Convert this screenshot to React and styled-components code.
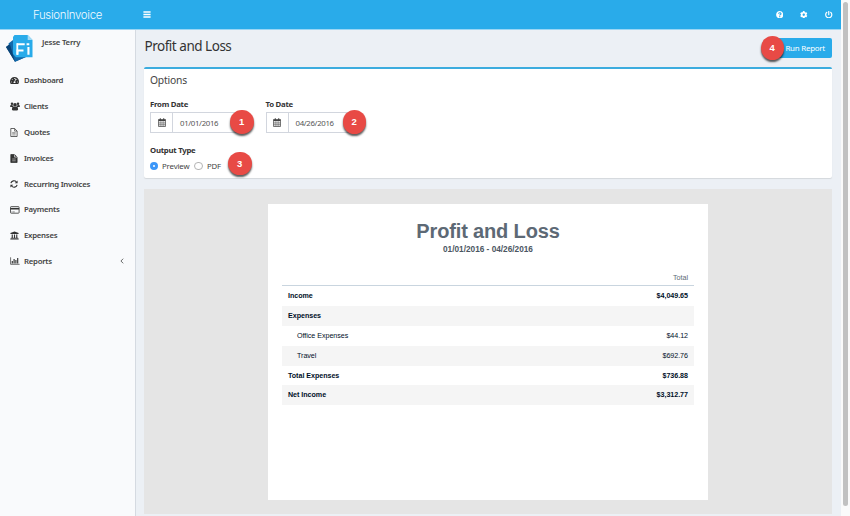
import React from "react";
import styled, { createGlobalStyle, css } from "styled-components";
import {
  FaTachometerAlt,
  FaUniversity,
  FaQuestionCircle,
  FaCog,
  FaPowerOff,
} from "react-icons/fa";

const GlobalStyle = createGlobalStyle`
  * { box-sizing: border-box; }
  body {
    margin: 0;
    overflow: hidden;
    background: #ecf0f5;
    font-family: "Source Sans Pro", "Noto Sans", sans-serif;
    font-size: 8px;
    color: #333;
  }
`;

const Window = styled.div`
  display: flex;
  width: 850px;
  height: 516px;
`;

const Page = styled.div`
  display: flex;
  flex-direction: column;
  width: 841px;
`;

const ScrollTrack = styled.div`
  width: 9px;
  padding: 2px 2px 10px;
  background: #fafafa;
`;

const ScrollThumb = styled.div`
  width: 5px;
  height: 504px;
  border-radius: 3px;
  background: #c1c1c1;
`;

const Header = styled.header`
  display: flex;
  align-items: center;
  height: 30px;
  background: #29abea;
  border-bottom: 1px solid #9bd6f4;
  color: #fff;
`;

const Brand = styled.div`
  width: 135px;
  text-align: center;
  font: 300 11.4px/30px Inter, sans-serif;
  letter-spacing: -0.3px;
  color: #f2faff;
`;

const MenuToggle = styled.div`
  display: flex;
  flex: 1;
  padding-left: 8px;
`;

const HeaderTools = styled.div`
  display: flex;
  align-items: center;
  gap: 17.2px;
  padding-right: 8.5px;
  font-size: 7.5px;
`;

const Body = styled.div`
  display: flex;
  flex: 1;
  min-height: 0;
`;

const Sidebar = styled.aside`
  width: 136px;
  background: #f9fafc;
  border-right: 1px solid #d5dae1;
`;

const UserPanel = styled.div`
  display: flex;
  gap: 7px;
  height: 38px;
  padding: 4px 0 0 5px;
`;

const UserName = styled.div`
  padding-top: 3px;
  font-weight: 600;
  font-size: 7.8px;
  line-height: 10px;
  letter-spacing: -0.22px;
  color: #444;
`;

const Nav = styled.nav`
  display: flex;
  flex-direction: column;
`;

const NavItem = styled.a`
  display: flex;
  align-items: center;
  height: 25.8px;
  padding: 0 11px 0 10px;
  color: #444;
  font-weight: 600;
  font-size: 7.8px;
  letter-spacing: -0.26px;
`;

const NavIcon = styled.span`
  display: flex;
  width: 14px;
  font-size: 9px;
  color: #333;
`;

const NavLabel = styled.span`
  flex: 1;
  line-height: 10px;
  padding-bottom: 1px;
`;

const Content = styled.main`
  flex: 1;
  min-width: 0;
  padding: 8px 9px 0 8px;
`;

const TitleBar = styled.div`
  display: flex;
  justify-content: space-between;
  height: 29px;
`;

const Title = styled.h1`
  margin: 0;
  padding-left: 0.5px;
  font-weight: 400;
  font-size: 13.5px;
  line-height: 17px;
  letter-spacing: -0.48px;
`;

const RunButton = styled.button`
  position: relative;
  width: 60px;
  height: 20px;
  padding: 0 7px 0 0;
  border: 0;
  border-radius: 2px;
  background: #29abea;
  color: #fff;
  font: 400 7.9px/20px "Noto Sans", sans-serif;
  letter-spacing: -0.22px;
  text-align: right;
`;

const Box = styled.section`
  height: 111px;
  padding: 0 6px;
  background: #fff;
  border-top: 2px solid #3cacde;
  border-radius: 2px;
  box-shadow: 0 1px 1px rgba(0, 0, 0, 0.1);
`;

const BoxTitle = styled.h3`
  margin: 0;
  font-weight: 400;
  font-size: 10.3px;
  line-height: 23px;
  letter-spacing: -0.2px;
  color: #444;
`;

const DateFields = styled.div`
  display: flex;
  gap: 23px;
  padding-top: 6px;
`;

const Field = styled.div`
  position: relative;
  width: 92.5px;
`;

const Label = styled.div`
  font-weight: 700;
  font-size: 7.8px;
  line-height: 12px;
  letter-spacing: -0.27px;
`;

const InputGroup = styled.div`
  display: flex;
  height: 21px;
  margin-top: 2px;
  border: 1px solid #d2d6de;
`;

const Addon = styled.span`
  display: flex;
  align-items: center;
  justify-content: center;
  width: 22px;
  border-right: 1px solid #d2d6de;
`;

const DateValue = styled.span`
  padding-left: 7px;
  font-size: 7.8px;
  line-height: 20px;
  color: #555;
  letter-spacing: -0.33px;
`;

const OutputType = styled.div`
  position: relative;
  padding-top: 11px;
`;

const Radios = styled.div`
  display: flex;
  align-items: center;
  height: 20px;
  font-size: 7.8px;
  letter-spacing: -0.13px;
  color: #444;
`;

const Radio = styled.span`
  width: 8.5px;
  height: 8.5px;
  margin-right: 4px;
  margin-left: ${(p) => p.$offset ?? -0.5}px;
  border-radius: 50%;
  ${(p) =>
    p.$checked
      ? css`
          border: 3px solid #3b96f8;
          background: #fff;
        `
      : css`
          border: 1px solid #b4b4b4;
          background: #fff;
        `}
`;

const Marker = styled.span`
  position: absolute;
  left: ${(p) => p.$left}px;
  top: ${(p) => p.$top}px;
  width: 23.5px;
  height: 23.5px;
  border-radius: 50%;
  background: #e84a45;
  box-shadow: 0 2px 2px rgba(0, 0, 0, 0.65);
  color: #fff;
  font: 700 9.5px/23px "Liberation Sans", sans-serif;
  letter-spacing: 0;
  text-align: center;
`;

const Preview = styled.section`
  display: flex;
  justify-content: center;
  height: 325px;
  margin-top: 11px;
  padding-top: 15px;
  background: #e5e5e5;
`;

const Paper = styled.article`
  width: 440px;
  height: 296px;
  padding: 13px 14px 0;
  background: #fff;
  font-family: "Liberation Sans", sans-serif;
  color: #001028;
`;

const ReportTitle = styled.h2`
  margin: 0;
  font-size: 20px;
  line-height: 28px;
  letter-spacing: -0.15px;
  text-align: center;
  color: #5d6975;
`;

const ReportRange = styled.div`
  font-weight: 700;
  font-size: 8.25px;
  line-height: 10px;
  text-align: center;
  color: #4b5662;
`;

const Table = styled.div`
  margin-top: 15px;
`;

const Row = styled.div`
  display: flex;
  justify-content: space-between;
  height: 19.9px;
  padding: 0 6px 0 ${(p) => (p.$indent ? 15 : 6)}px;
  background: ${(p) => (p.$shaded ? "#f5f5f5" : "transparent")};
  font-weight: ${(p) => (p.$bold ? 700 : 400)};
  font-size: 7.15px;
  line-height: 20px;
  letter-spacing: -0.04px;
`;

const HeadRow = styled.div`
  height: 16px;
  padding-right: 6px;
  border-bottom: 1px solid #c9d5df;
  font-size: 7.15px;
  line-height: 17px;
  text-align: right;
  color: #5d6975;
`;

const BarsIcon = () => (
  <svg width="8" height="7" viewBox="0 0 8 7">
    <path d="M.4 1h7.2M.4 3.5h7.2M.4 6h7.2" stroke="#fff" strokeWidth="1.4" />
  </svg>
);

const Logo = () => (
  <svg width="30" height="29" viewBox="0 0 30 29">
    <path d="M1 13 7 8l16 14-13 5.800z" fill="#0b4c84" />
    <path d="M8 6 3.500 9.500l4 13 2.500 5.300L21 23z" fill="#1169ab" />
    <path d="M1 13l4-2.500 5 17.300z" fill="#0a4377" />
    <path d="M9.500 1h13.200l4.800 5v17.200H11L8 20V3z" fill="#29abea" />
    <path d="M22.700 1v5h4.800z" fill="#a4dbf6" />
    <path d="M12.500 20.700v-4.200h6M11.800 10.200h12.500" fill="none" stroke="#fff" strokeWidth="2" />
    <path d="M11.400 9.200h1.800v11.600h-1.800zM22.400 13h2.100v7.800h-2.100z" fill="#fff" />
    <path d="M19.700 9h1.900v3h-1.900z" fill="#29abea" />
  </svg>
);

const UsersIcon = () => (
  <svg width="10" height="9" viewBox="0 0 10 9">
    <g fill="#333">
      <circle cx="2" cy="1.800" r="1.250" />
      <circle cx="8" cy="1.800" r="1.250" />
      <path d="M.2 5V4q0-1 .8-1l1.600.2L3.400 5zM9.800 5V4q0-1-.8-1l-1.600.2L6.600 5z" />
      <circle cx="5" cy="2.900" r="1.800" />
      <path d="M1.900 7.300q0-2.700 1.500-2.700Q5 5.600 6.600 4.600q1.500 0 1.500 2.700 0 1.100-1 1.100H2.900q-1 0-1-1.100z" />
    </g>
  </svg>
);

const RefreshIcon = () => (
  <svg width="8" height="8" viewBox="0 0 8 8">
    <path
      d="M.9 3.200A3.100 3.100 0 0 1 6.400 2M7.100 4.800A3.100 3.100 0 0 1 1.600 6"
      fill="none"
      stroke="#333"
      strokeWidth="1.150"
    />
    <path d="M7.600.4v2.900H4.700zM.4 7.600V4.700h2.900z" fill="#333" />
  </svg>
);

const FileIcon = ({ solid }) => (
  <svg width="8" height="9" viewBox="0 0 8 9">
    <path
      d="M.8.5h3.800l2.500 2.600v5.400H.8z"
      fill={solid ? "#333" : "#fff"}
      stroke="#333"
      strokeWidth=".75"
    />
    <path d="M4.600.5v2.600h2.500" fill="none" stroke={solid ? "#fff" : "#333"} strokeWidth=".65" />
    <path
      d={solid ? "M2.200 5h3.500M2.200 6.800h3.500" : "M2.200 4.400h3.500M2.200 5.700h3.500M2.200 7h3.500"}
      stroke={solid ? "#fff" : "#333"}
      strokeWidth=".5"
    />
  </svg>
);

const CardIcon = () => (
  <svg width="10" height="8" viewBox="0 0 10 8">
    <rect x=".5" y=".6" width="8.6" height="6.6" rx=".7" fill="none" stroke="#333" strokeWidth=".8" />
    <path d="M.5 2.700h8.600" stroke="#333" strokeWidth="1.6" />
    <path d="M1.500 5.900h1.100M3.100 5.900h1.600" stroke="#333" strokeWidth=".6" />
  </svg>
);

const ChartIcon = () => (
  <svg width="10" height="8" viewBox="0 0 10 8">
    <path d="M.6.3v7h9" fill="none" stroke="#333" strokeWidth=".7" />
    <path d="M2.300 3.900v2.700M4.100 2v4.600M5.900 3.100v3.500M7.700 1v5.600" stroke="#333" strokeWidth="1.15" />
  </svg>
);

const AngleIcon = () => (
  <svg width="4" height="6" viewBox="0 0 4 6">
    <path d="M3.200.7.9 3l2.300 2.300" fill="none" stroke="#444" strokeWidth=".8" />
  </svg>
);

const CalendarIcon = () => (
  <svg width="8" height="9" viewBox="0 0 8 9">
    <path d="M.5 1.500h7v7h-7z" fill="#fff" stroke="#444" strokeWidth=".7" />
    <path d="M.5 2.300h7" stroke="#444" strokeWidth="1.4" />
    <path d="M2.300.2v2M5.700.2v2" stroke="#444" strokeWidth="1.1" />
    <path d="M2.200 3v5.500M4 3v5.500M5.800 3v5.500M.5 4.900h7M.5 6.700h7" stroke="#444" strokeWidth=".5" />
  </svg>
);

const navItems = [
  { label: "Dashboard", icon: <FaTachometerAlt /> },
  { label: "Clients", icon: <UsersIcon /> },
  { label: "Quotes", icon: <FileIcon /> },
  { label: "Invoices", icon: <FileIcon solid /> },
  { label: "Recurring Invoices", icon: <RefreshIcon /> },
  { label: "Payments", icon: <CardIcon /> },
  { label: "Expenses", icon: <FaUniversity /> },
  { label: "Reports", icon: <ChartIcon />, expandable: true },
];

const rows = [
  { name: "Income", total: "$4,049.65", bold: true },
  { name: "Expenses", total: "", bold: true },
  { name: "Office Expenses", total: "$44.12", indent: true },
  { name: "Travel", total: "$692.76", indent: true },
  { name: "Total Expenses", total: "$736.88", bold: true },
  { name: "Net Income", total: "$3,312.77", bold: true },
];

const DateField = ({ label, value, marker, markerLeft }) => (
  <Field>
    <Label>{label}</Label>
    <InputGroup>
      <Addon>
        <CalendarIcon />
      </Addon>
      <DateValue>{value}</DateValue>
    </InputGroup>
    <Marker $left={markerLeft} $top={12}>
      {marker}
    </Marker>
  </Field>
);

export default function App() {
  return (
    <Window>
      <GlobalStyle />
      <Page>
        <Header>
          <Brand>FusionInvoice</Brand>
          <MenuToggle>
            <BarsIcon />
          </MenuToggle>
          <HeaderTools>
            <FaQuestionCircle />
            <FaCog />
            <FaPowerOff />
          </HeaderTools>
        </Header>
        <Body>
          <Sidebar>
            <UserPanel>
              <Logo />
              <UserName>Jesse Terry</UserName>
            </UserPanel>
            <Nav>
              {navItems.map((item) => (
                <NavItem key={item.label}>
                  <NavIcon>{item.icon}</NavIcon>
                  <NavLabel>{item.label}</NavLabel>
                  {item.expandable && <AngleIcon />}
                </NavItem>
              ))}
            </Nav>
          </Sidebar>
          <Content>
            <TitleBar>
              <Title>Profit and Loss</Title>
              <RunButton>
                Run Report
                <Marker $left={-11.5} $top={-2}>4</Marker>
              </RunButton>
            </TitleBar>
            <Box>
              <BoxTitle>Options</BoxTitle>
              <DateFields>
                <DateField label="From Date" value="01/01/2016" marker="1" markerLeft={80} />
                <DateField label="To Date" value="04/26/2016" marker="2" markerLeft={77} />
              </DateFields>
              <OutputType>
                <Label>Output Type</Label>
                <Radios>
                  <Radio $checked />
                  Preview
                  <Radio $offset={5} />
                  PDF
                </Radios>
                <Marker $left={78} $top={18.5}>3</Marker>
              </OutputType>
            </Box>
            <Preview>
              <Paper>
                <ReportTitle>Profit and Loss</ReportTitle>
                <ReportRange>01/01/2016 - 04/26/2016</ReportRange>
                <Table>
                  <HeadRow>Total</HeadRow>
                  {rows.map((row, i) => (
                    <Row key={row.name} $bold={row.bold} $indent={row.indent} $shaded={i % 2 === 1}>
                      <span>{row.name}</span>
                      <span>{row.total}</span>
                    </Row>
                  ))}
                </Table>
              </Paper>
            </Preview>
          </Content>
        </Body>
      </Page>
      <ScrollTrack>
        <ScrollThumb />
      </ScrollTrack>
    </Window>
  );
}
